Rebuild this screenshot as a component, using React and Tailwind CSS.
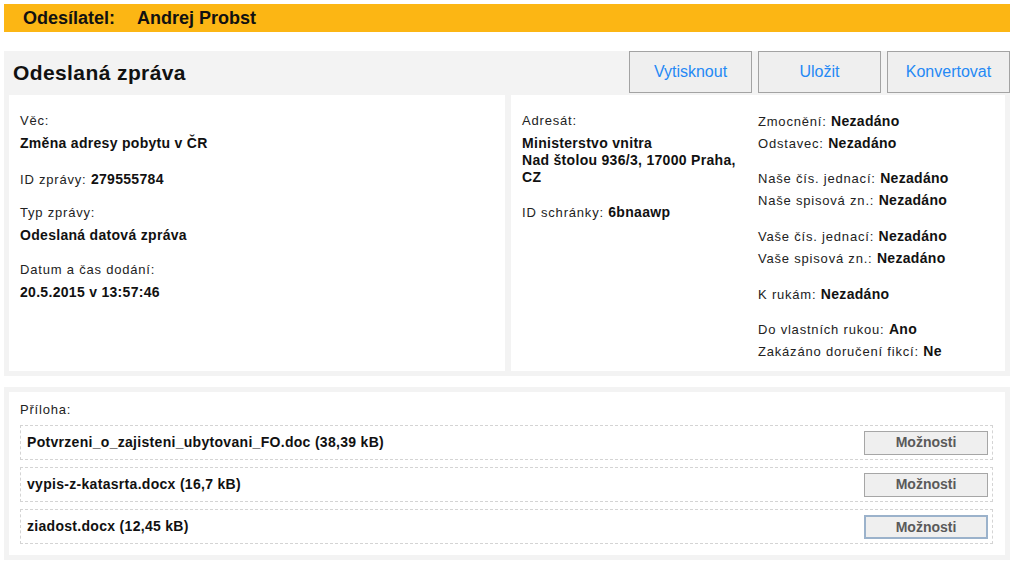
import React from "react";

const label = "text-[13px] tracking-[0.8px] text-[#222] font-normal";
const value = "text-[14px] font-bold tracking-[0.3px] text-[#111]";

function Field({ name, val, className = "" }) {
  return (
    <div className={"h-[22px] leading-[22px] whitespace-nowrap " + className}>
      <span className={label}>{name} </span>
      <span className={value}>{val}</span>
    </div>
  );
}

function Attachment({ name, focused }) {
  return (
    <div className="flex h-[35px] items-center justify-between border border-dashed border-[#d4d4d4] pl-[6px] pr-[4px]">
      <span className={value}>{name}</span>
      <button
        className={
          "h-[24px] w-[124px] bg-[#efefef] text-[14px] font-bold text-[#5a5a5a] " +
          (focused ? "border-2 border-[#9bb2cb]" : "border border-[#a6a6a6]")
        }
      >
        Možnosti
      </button>
    </div>
  );
}

export default function App() {
  const headerButtons = ["Vytisknout", "Uložit", "Konvertovat"];
  const attachments = [
    "Potvrzeni_o_zajisteni_ubytovani_FO.doc (38,39 kB)",
    "vypis-z-katasrta.docx (16,7 kB)",
    "ziadost.docx (12,45 kB)",
  ];

  return (
    <div className="h-[566px] w-[1016px] bg-white pt-[4px] pl-[4px] font-['Liberation_Sans',Arial,sans-serif]">
      <div className="w-[1006px]">
        {/* sender bar */}
        <div className="flex h-[28px] items-center bg-[#fcb614] pl-[19px] text-[18px] font-bold text-[#111]">
          <span className="w-[114px]">Odesílatel:</span>
          <span>Andrej Probst</span>
        </div>

        {/* message panel */}
        <div className="mt-[19px] bg-[#f3f3f3] pb-[5px]">
          <div className="flex h-[44px] items-start justify-between">
            <h1 className="pl-[9px] pt-[6px] text-[21px] font-bold tracking-[0.4px] text-[#111]">
              Odeslaná zpráva
            </h1>
            <div className="flex gap-[6px]">
              {headerButtons.map((b) => (
                <button
                  key={b}
                  className="h-[42px] w-[123px] border border-[#a3a3a3] bg-[#efefef] text-[16px] text-[#2589f5]"
                >
                  {b}
                </button>
              ))}
            </div>
          </div>

          <div className="flex gap-[6px] px-[5px]">
            <div className="h-[276px] w-[496px] bg-white pl-[11px] pt-[15px]">
              <div className={"h-[22px] leading-[22px] " + label}>Věc:</div>
              <div className={"h-[22px] leading-[22px] " + value}>Změna adresy pobytu v ČR</div>
              <Field name="ID zprávy:" val="279555784" className="mt-[14px]" />
              <div className={"mt-[12px] h-[22px] leading-[22px] " + label}>Typ zprávy:</div>
              <div className={"h-[22px] leading-[22px] " + value}>Odeslaná datová zpráva</div>
              <div className={"mt-[13px] h-[22px] leading-[22px] " + label}>Datum a čas dodání:</div>
              <div className={"h-[22px] leading-[22px] " + value}>20.5.2015 v 13:57:46</div>
            </div>

            <div className="flex h-[276px] flex-1 bg-white pl-[11px] pt-[15px]">
              <div className="w-[222px]">
                <div className={"h-[22px] leading-[22px] " + label}>Adresát:</div>
                <div className={"mt-[3px] leading-[17px] " + value}>
                  Ministerstvo vnitra
                  <br />
                  Nad štolou 936/3, 17000 Praha, CZ
                </div>
                <Field name="ID schránky:" val="6bnaawp" className="mt-[15px]" />
              </div>
              <div className="ml-[14px]">
                <Field name="Zmocnění:" val="Nezadáno" />
                <Field name="Odstavec:" val="Nezadáno" />
                <Field name="Naše čís. jednací:" val="Nezadáno" className="mt-[13px]" />
                <Field name="Naše spisová zn.:" val="Nezadáno" />
                <Field name="Vaše čís. jednací:" val="Nezadáno" className="mt-[14px]" />
                <Field name="Vaše spisová zn.:" val="Nezadáno" />
                <Field name="K rukám:" val="Nezadáno" className="mt-[14px]" />
                <Field name="Do vlastních rukou:" val="Ano" className="mt-[13px]" />
                <Field name="Zakázáno doručení fikcí:" val="Ne" />
              </div>
            </div>
          </div>
        </div>

        {/* attachments panel */}
        <div className="mt-[11px] bg-[#f3f3f3] px-[5px] py-[5px]">
          <div className="bg-white pb-[11px] pl-[11px] pr-[12px] pt-[9px]">
            <div className={"leading-[18px] " + label}>Příloha:</div>
            <div className="mt-[6px] flex flex-col gap-[7px]">
              {attachments.map((a, i) => (
                <Attachment key={a} name={a} focused={i === 2} />
              ))}
            </div>
          </div>
        </div>
      </div>
    </div>
  );
}
